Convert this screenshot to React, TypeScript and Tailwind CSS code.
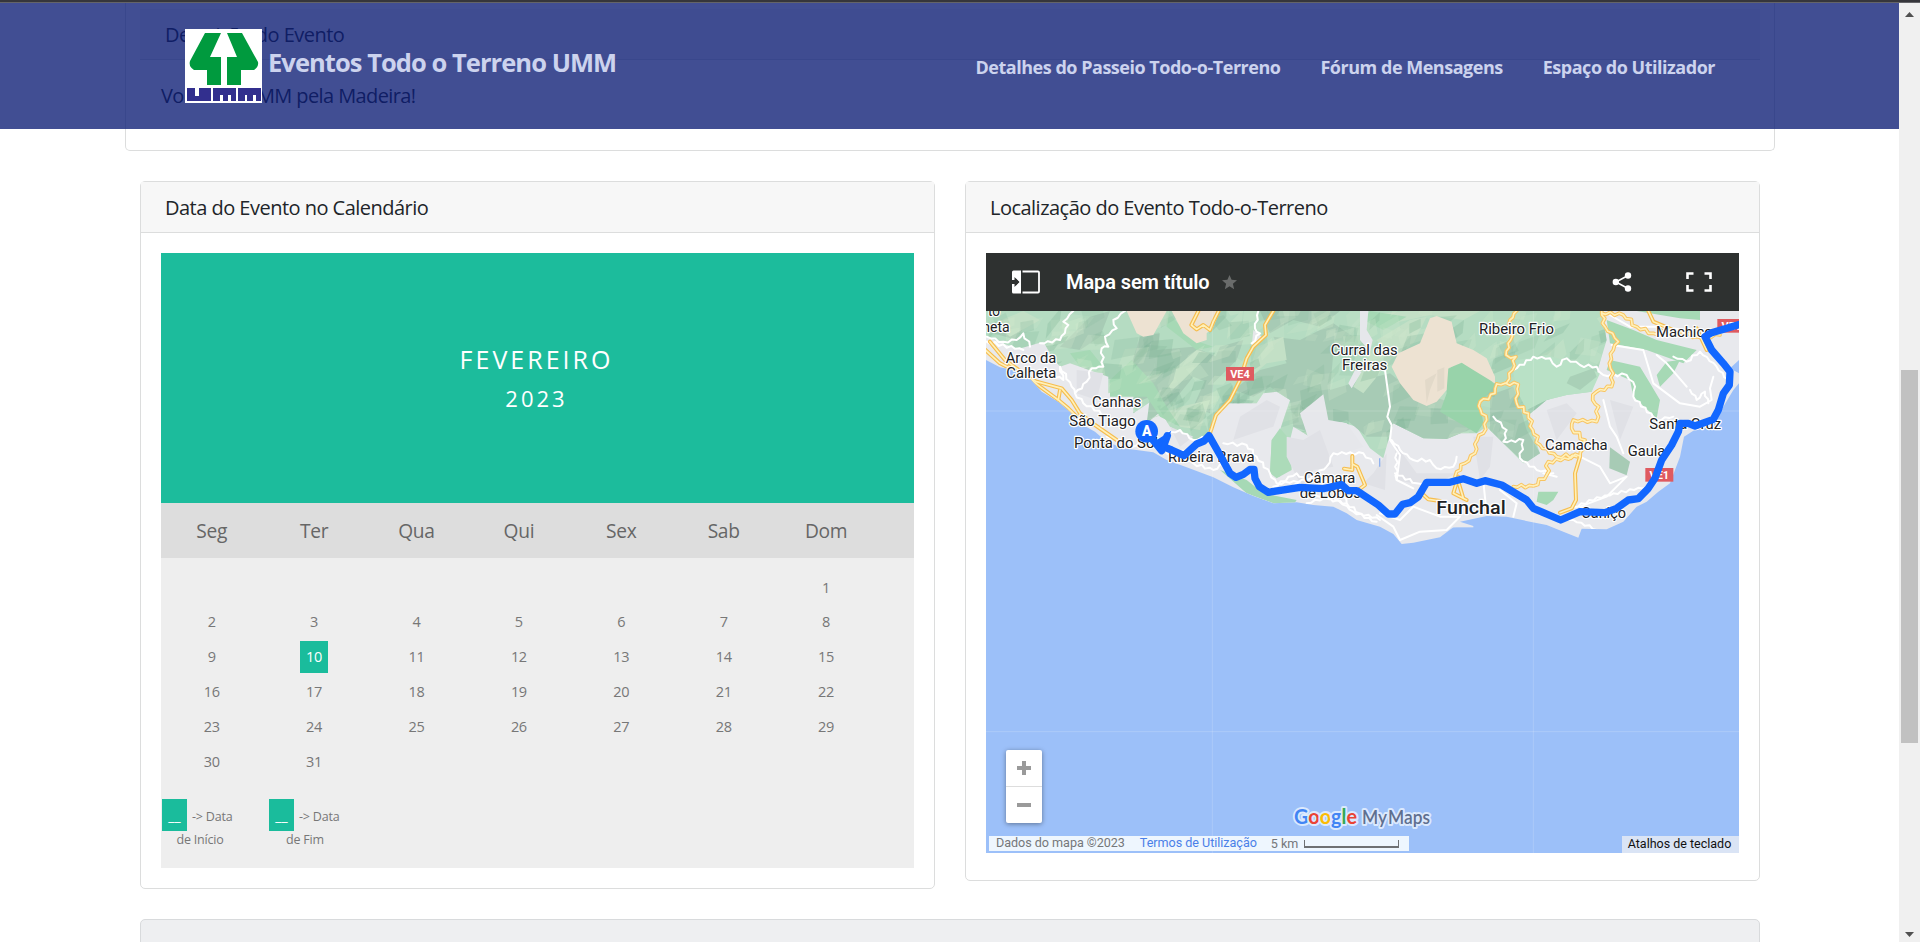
import React from "react";

const weekdays = ["Seg", "Ter", "Qua", "Qui", "Sex", "Sab", "Dom"];
const days: (number | null)[] = [
  ...Array<null>(6).fill(null),
  ...Array.from({ length: 31 }, (_, i) => i + 1),
];

function Logo() {
  return (
    <svg width="77" height="74" viewBox="0 0 77 74" className="block bg-white">
      <g fill="#009a3e">
        <path d="M20 4H36L25 28H36V56H22V41H9Q3 37 5 32Z" />
        <path d="M42 4H57L73 33Q74 38 69 41H56V56H42V28H52Z" />
      </g>
      <g fill="#322f8e">
        <path d="M2 59H10V67H14V59H26V72H2Z" />
        <path d="M28 59H51V72H46V66H43V72H38V66H35V72H28Z" />
        <path d="M53 59H76V72H71V66H68V72H62V66H60V72H53Z" />
      </g>
    </svg>
  );
}

// Small seeded generator, so that relief and winding roads are the same on every render.
function makeRandom(seed: number) {
  let s = seed;
  return () => {
    s = (s * 16807) % 2147483647;
    return s / 2147483647;
  };
}

// Adds bends to a polyline path made of absolute M/L coordinates.
function winding(d: string, amount: number, seed: number) {
  const rnd = makeRandom(seed);
  return d
    .split("M")
    .filter(Boolean)
    .map((part) => {
      const pts = part.split("L").map((p) => p.trim().split(" ").map(Number));
      // a run such as "L10 20L30 40" may also be written "L10 20 30 40"
      let out = `M${pts[0][0]} ${pts[0][1]}`;
      for (let i = 1; i < pts.length; i++) {
        const [x0, y0] = pts[i - 1];
        const [x1, y1] = pts[i];
        const len = Math.hypot(x1 - x0, y1 - y0);
        const n = Math.max(1, Math.round(len / 13));
        for (let k = 1; k < n; k++) {
          const t = k / n;
          const o = (k % 2 ? 1 : -1) * amount * (0.3 + 0.7 * rnd());
          const x = x0 + (x1 - x0) * t - ((y1 - y0) / len) * o;
          const y = y0 + (y1 - y0) * t + ((x1 - x0) / len) * o;
          out += `L${x.toFixed(1)} ${y.toFixed(1)}`;
        }
        out += `L${x1} ${y1}`;
      }
      return out;
    })
    .join("");
}

const toPath = (runs: number[][]) =>
  runs
    .map((r) => {
      let out = "";
      for (let i = 0; i < r.length; i += 2) out += `${i ? "L" : "M"}${r[i]} ${r[i + 1]}`;
      return out;
    })
    .join("");

const smoothYellow = [
  "M0 315L60 370L110 395L170 425L245 445L275 480L300 520L345 555L410 600",
  "M30 305L75 360L130 400L180 440L235 480L265 505L290 530",
  "M235 480L240 450",
  "M880 213L855 255L858 285L820 320L800 355L780 420L750 480L708 525L690 580",
  "M655 213L634 255L650 268L670 255L690 270L700 245L716 213",
  "M1117 648V690L1092 686M1117 672L1132 680L1155 735L1135 750",
  "M1800 650L1785 700L1788 780L1775 805L1740 818",
  "M2005 213L2020 245L2080 270M2150 265L2180 330",
  "M1320 755L1345 778L1380 783M1435 710L1420 760L1460 780M1435 725L1450 775",
];

const windingYellow = [
  [[1610, 213, 1590, 240, 1592, 300, 1578, 345, 1608, 350, 1598, 390, 1580, 428]],
  [[1550, 432, 1615, 433, 1610, 490, 1645, 520, 1658, 570, 1680, 615, 1730, 650, 1800, 648]],
  [[1550, 432, 1545, 460, 1500, 485, 1502, 510, 1520, 540, 1510, 580, 1492, 600, 1485, 640, 1455, 670, 1430, 695, 1425, 710]],
  [[1865, 213, 1875, 260, 1898, 280, 1915, 305, 1900, 330, 1888, 370, 1900, 400, 1895, 440, 1850, 455, 1838, 480, 1856, 500, 1850, 545, 1780, 540, 1775, 565, 1815, 600, 1800, 650]],
  [[1600, 740, 1660, 738, 1700, 705, 1705, 665, 1790, 650]],
  [[1865, 220, 1930, 225, 1970, 260, 2020, 280, 2080, 270, 2150, 290, 2220, 285]],
].map((r, i) => winding(toPath(r), 7, 31 + i));

const whiteRoads = [
  [[280, 213, 250, 245, 265, 255, 240, 300, 180, 310]],
  [[20, 290, 70, 305, 110, 300, 130, 280, 150, 320], [20, 305, 130, 330]],
  [[435, 213, 400, 240, 410, 265, 375, 290, 385, 320, 365, 325, 370, 380, 335, 385, 320, 425, 285, 460, 275, 440, 240, 380, 250, 420, 200, 400], [285, 460, 310, 490, 390, 535]],
  [[835, 213, 825, 265, 840, 280, 815, 310]],
  [[1235, 600, 1260, 630, 1300, 660, 1350, 660, 1370, 685, 1420, 680, 1430, 650], [1250, 640, 1250, 720], [1245, 700, 1310, 730, 1420, 725]],
  [[730, 610, 800, 615, 830, 650, 870, 700, 890, 730, 980, 720, 1040, 680, 1060, 640, 1150, 640, 1180, 670]],
  [[870, 760, 960, 730, 1020, 770, 1100, 790, 1140, 820, 1200, 840], [1020, 720, 1080, 735, 1100, 790]],
  [[380, 590, 420, 600, 460, 620, 500, 590, 530, 620, 570, 575, 600, 570, 640, 600, 680, 590]],
  [[560, 640, 640, 670, 700, 690, 730, 670]],
  [[1600, 390, 1660, 350, 1710, 355, 1730, 380, 1760, 355, 1800, 375, 1850, 380, 1870, 405, 1940, 405, 1965, 440, 1960, 470, 2030, 540, 2080, 530]],
  [[2080, 350, 2120, 365, 2160, 335, 2210, 380, 2250, 430], [2130, 450, 2150, 480, 2175, 455, 2185, 490]],
  [[1540, 530, 1580, 570, 1570, 605, 1630, 600, 1620, 655, 1670, 690, 1720, 700]],
  [[1640, 790, 1700, 820, 1780, 840, 1850, 870], [1780, 800, 1900, 760, 2000, 740]],
  [[980, 790, 1060, 770, 1120, 815, 1190, 845], [880, 740, 950, 700, 990, 730]],
].map((r, i) => winding(toPath(r), 5, 77 + i));

const plainWhite = [
  "M1215 390L1230 500L1222 530L1235 555L1230 600L1260 645L1250 720L1300 745",
  "M1895 315L1990 330L2020 430L2100 490L2160 500L2195 480L2190 445L2200 410",
  "M2030 345L2060 370L2120 440",
  "M1870 480L1890 560L1910 590L1930 640",
  "M1800 650L1860 680L1890 730L1940 710L1880 770L1800 800L1850 830",
  "M1200 820L1260 840L1300 800L1380 830L1440 830L1400 870L1320 875L1260 900L1240 860L1190 825",
  "M1510 725L1520 820M1560 750L1610 790L1600 830M1690 700L1730 710M1890 225L1950 260L2050 260L2110 270",
];

const relief = (() => {
  const rnd = makeRandom(4711);
  return Array.from({ length: 330 }, () => {
    const x = 18 + rnd() * 2000;
    const y = 205 + rnd() * 400;
    const a = -1.15 + rnd() * 0.9;
    const l = 35 + rnd() * 80;
    const w = 10 + rnd() * 32;
    const c = Math.cos(a);
    const s = Math.sin(a);
    const p = (u: number, v: number) => `${(x + c * u - s * v).toFixed(0)},${(y + s * u + c * v).toFixed(0)}`;
    return {
      points: [p(-l / 2, 0), p(-l * 0.1, -w), p(l / 2, -w * 0.2), p(l * 0.15, w * 0.7)].join(" "),
      fill: rnd() > 0.52 ? "#d4ebcf" : "#7fb497",
      opacity: 0.14 + rnd() * 0.2,
    };
  });
})();

const greenArea =
  "M18 213H1865L1880 300L1850 400L1835 455L1760 465L1700 480L1640 530L1680 640L1630 670L1570 610L1520 560L1490 580L1440 580L1400 597L1330 595L1240 550L1225 600L1210 655L1170 625L1130 560L1080 545L1040 570L990 590L940 560L930 600L900 710L870 700L875 600L900 570L930 480L890 455L850 460L830 490L740 490L708 525L680 585L640 600L570 560L520 480L460 520L460 435L385 460L385 410L300 380L270 370L240 380L200 330L150 340L120 330L18 290Z";

type Label = { x: number; y: number; t: string; w: number; s?: number };
const labels: Label[] = [
  { x: 24, y: 228, t: "to", w: 36 },
  { x: 7, y: 275, t: "heta", w: 82 },
  { x: 77, y: 370, t: "Arco da", w: 152 },
  { x: 79, y: 414, t: "Calheta", w: 150 },
  { x: 336, y: 501, t: "Canhas", w: 148 },
  { x: 268, y: 559, t: "São Tiago", w: 199 },
  { x: 282, y: 625, t: "Ponta do Sol", w: 252 },
  { x: 564, y: 666, t: "Ribeira Brava", w: 260 },
  { x: 972, y: 728, t: "Câmara", w: 154 },
  { x: 959, y: 774, t: "de Lobos", w: 184 },
  { x: 1052, y: 345, t: "Curral das", w: 201 },
  { x: 1086, y: 391, t: "Freiras", w: 136 },
  { x: 1497, y: 282, t: "Ribeiro Frio", w: 225 },
  { x: 2028, y: 291, t: "Machico", w: 170 },
  { x: 2008, y: 567, t: "Santa Cruz", w: 215 },
  { x: 1943, y: 648, t: "Gaula", w: 113 },
  { x: 1695, y: 629, t: "Camacha", w: 188 },
  { x: 1804, y: 834, t: "Caniço", w: 134 },
  { x: 1369, y: 822, t: "Funchal", w: 208, s: 56 },
];

function Shield({ x, y, t }: { x: number; y: number; t: string }) {
  return (
    <g>
      <rect x={x} y={y} width="84" height="41" fill="#df5a60" />
      <text x={x + 42} y={y + 32} textAnchor="middle" fontSize="33" fontWeight="700" fill="#fff">
        {t}
      </text>
    </g>
  );
}

function MapDrawing() {
  return (
    <svg
      viewBox="18 213 2259 1626"
      preserveAspectRatio="none"
      className="block h-full w-full"
      fontFamily="Roboto, sans-serif"
    >
      <defs>
        <clipPath id="land">
          <path d="M18 213V360L60 382L110 392L150 415L185 455L235 485L270 515L300 550L345 575L380 605L430 625L520 637L560 660L620 682L700 712L760 742L820 768L880 790L950 787L1000 795L1060 800L1100 820L1130 840L1200 860L1240 882L1265 912L1300 908L1380 892L1420 862L1480 858L1440 845L1520 828L1580 830L1650 845L1700 855L1750 875L1795 893L1805 866L1880 868L1930 845L1970 800L2000 785L2035 755L2070 730L2100 650L2112 590L2140 572L2195 560L2230 500L2260 450L2277 430V400L2250 385L2277 360V213Z" />
        </clipPath>
        <clipPath id="green">
          <path d={greenArea} />
        </clipPath>
      </defs>
      <rect x="18" y="213" width="2259" height="1626" fill="#9cc0f9" />
      <g clipPath="url(#land)">
        <rect x="18" y="213" width="2259" height="720" fill="#e8e9ed" />
        <path fill="#b5dcc2" d={greenArea} />
        <g fill="#a7cbb5">
          <path d="M480 290L540 280L520 400L480 420L455 370Z" />
          <path d="M530 330L640 320L710 350L690 430L640 410L600 460L560 500L500 550L510 470L440 500L520 400Z" />
          <path d="M720 320L790 300L770 360L700 430L690 520L640 500L680 410Z" />
          <path d="M880 290L960 300L1060 250L1120 290L1060 340L1050 450L1150 420L1230 400L1280 440L1390 480L1490 560L1400 597L1330 595L1240 550L1225 590L1160 590L1100 540L1050 560L1020 470L960 530L1000 580L940 560L930 480L870 440L820 470L760 450L840 390L920 370Z" />
          <path d="M840 213H1080L1020 260L940 240L870 280Z" />
          <path d="M60 240L150 225L110 300L40 280ZM330 230L390 213L360 290L300 330L240 320Z" />
          <path d="M1530 465L1600 440L1620 500L1640 570L1680 640L1635 670L1570 610L1530 570Z" />
        </g>
        <g fill="#c3e0c6">
          <path d="M590 380L650 330L690 340L600 430L530 490L580 420Z" />
          <path d="M830 320L910 290L920 360L860 370L800 420ZM1190 300L1290 240L1340 230L1300 310L1230 360Z" />
          <path d="M1145 225L1280 213H1500L1450 240L1350 225L1240 250ZM40 250L130 213L180 240L90 290Z" />
          <path d="M600 500L690 480L660 570L600 560L560 520L500 540ZM1180 330L1240 350L1150 460L1120 440Z" />
        </g>
        <g fill="#a6d9b5">
          <path d="M270 340L330 330L370 380L300 380ZM390 420L455 360L520 430L560 500L600 560L540 530L500 470L390 470Z" />
          <path d="M1170 213L1280 230L1210 270L1150 240ZM560 213L640 300L700 320L650 330L560 260Z" />
          <path d="M720 690L800 720L850 760L950 780L940 795L880 790L800 760Z" />
          <path d="M1880 240L1960 270L2030 300L2150 330L2110 370L2000 330L1890 310ZM1890 360L1980 380L2010 430L2040 480L2030 535L1960 470L1950 420L1880 390Z" />
          <path d="M2060 365L2100 360L2080 400L2040 440L2030 405ZM1675 755H1735L1720 780L1700 795L1670 785ZM1970 213H2160V240L2100 235Z" />
        </g>
        <path fill="#a7cbb5" d="M1890 622L1950 665L1940 706L1888 685Z" />
        <g clipPath="url(#green)">
          {relief.map((r, i) => (
            <polygon key={i} points={r.points} fill={r.fill} opacity={r.opacity} />
          ))}
        </g>
        <path fill="#b9e1c6" d="M1610 360L1700 345L1800 375L1860 400L1835 455L1760 465L1700 480L1640 510L1610 450L1600 400Z" />
        <path fill="#a9d0b7" d="M1770 410L1840 385L1850 410L1800 450L1760 430Z" />
        <g fill="#98d3aa">
          <path d="M1400 390L1440 365L1500 385L1545 435L1500 490L1510 550L1490 580L1380 515L1400 460Z" />
          <path d="M875 600L900 565L930 600L935 690L890 715L870 700Z" fill="#acdbb9" />
        </g>
        <g fill="#e6e7eb">
          <path d="M960 520L1030 463L1045 540L1100 550L1150 620L1060 650L990 610ZM1140 213H1165L1160 270L1178 300L1170 335L1140 300Z" />
          <path d="M1105 430L1125 390L1145 395L1115 445ZM105 330L190 305L210 340L170 350ZM820 270L845 290L815 320Z" />
        </g>
        <g fill="#e0e1e6">
          <path d="M920 590L970 600L1020 570L1060 680L1000 690L970 750L920 650ZM780 530L860 480L900 500L880 560L760 600Z" />
          <path d="M1245 610L1310 700L1430 700L1350 740L1250 720ZM1180 700L1220 640L1215 750L1150 730ZM1480 590L1540 590L1530 680L1500 720Z" />
          <path d="M290 390L370 400L350 480L290 460ZM570 560L640 590L600 620ZM1700 510L1760 490L1790 520L1730 600ZM1890 480L1960 500L1920 600Z" />
        </g>
        <g fill="#ede2d2">
          <path d="M440 213H560L520 285L490 290L470 280ZM575 213H720L700 260L680 280L680 300L650 310L610 280Z" />
          <path d="M1350 235L1370 228L1415 245L1430 310L1480 330L1520 355L1545 410V430L1480 390L1445 368L1405 385L1400 450L1370 485L1340 498L1300 480L1260 430L1235 380L1255 340L1320 310Z" />
        </g>
        <path fill="#e2d9c9" d="M1372 390L1393 382V445L1372 455ZM1335 420L1370 400L1350 450L1340 490Z" />
        <g fill="none" strokeLinejoin="round" strokeLinecap="round">
          {[...whiteRoads, ...plainWhite].map((d) => (
            <path key={d} d={d} stroke="#fff" strokeWidth="6" />
          ))}
          {smoothYellow.map((d) => (
            <path key={d} d={d} stroke="#f6bd4f" strokeWidth="12" />
          ))}
          {windingYellow.map((d) => (
            <path key={d} d={d} stroke="#f8c462" strokeWidth="11" />
          ))}
          {[...smoothYellow, ...windingYellow].map((d) => (
            <path key={d} d={d} stroke="#fff0b8" strokeWidth="5" />
          ))}
        </g>
        <path d="M1199 655V680" stroke="#8fb2ee" strokeWidth="4" />
      </g>
      <path d="M1418 860H1480" stroke="#e8e9ed" strokeWidth="4" />
      <g stroke="#fff" strokeOpacity="0.17" strokeWidth="3">
        <path d="M18 513H2277M18 1475H2277M697 213V1839M1660 213V1839" />
      </g>
      <g fill="#202124" stroke="#fff" strokeWidth="7" strokeLinejoin="round" paintOrder="stroke">
        {labels.map((l) => (
          <text
            key={l.t}
            x={l.x}
            y={l.y}
            fontSize={l.s ?? 43}
            fontWeight={l.s ? 500 : 400}
            textLength={l.w}
            lengthAdjust="spacingAndGlyphs"
          >
            {l.t}
          </text>
        ))}
      </g>
      <Shield x={738} y={381} t="VE4" />
      <Shield x={1996} y={684} t="VE1" />
      <Shield x={2212} y={237} t="VE1" />
      <path
        fill="none"
        stroke="#1267ff"
        strokeWidth="22"
        strokeLinecap="round"
        strokeLinejoin="round"
        d="M515 595L545 632L562 587L550 620L575 630L612 647L650 612L672 603L687 587L720 645L750 700L768 712L790 703L810 688H822L825 715L838 740L865 757L960 742L1030 746L1085 734L1105 752L1130 752L1195 795L1225 822H1245L1268 793L1290 788L1315 770L1340 727H1410L1450 716L1490 730L1515 722L1565 735L1640 780L1660 805L1742 840L1800 815L1875 818L1910 805L1945 780L1975 776L2005 745L2025 715L2045 660L2075 615L2095 575L2100 550H2125L2145 558L2200 538L2215 510L2230 460L2248 435L2250 395L2230 370L2195 330L2175 290L2195 278L2280 253"
      />
      <path d="M525 610L562 587L545 632Z" fill="#1267ff" stroke="#1267ff" strokeWidth="12" />
      <circle cx="500" cy="574" r="34" fill="#1267ff" />
      <text x="500" y="589" textAnchor="middle" fontSize="42" fontWeight="900" fill="#fff">
        A
      </text>
    </svg>
  );
}

function MapHeader() {
  return (
    <div className="flex h-[58px] shrink-0 items-center bg-[#2e3130] pl-[26px] pr-[27px] text-white">
      <svg width="28" height="24" viewBox="0 0 28 24" className="block">
        <path d="M1.5 .5H9V23.500H1.500Q0 23.500 0 22V14H2.500V17L7 12L2.500 7V10H0V2Q0 .5 1.500 .5Z" fill="#fff" />
        <path d="M0 11H3.500V8L7.500 12L3.500 16V13H0Z" fill="#2e3130" />
        <path d="M10.500 1.500H26Q27 1.500 27 2.500V21.500Q27 22.500 26 22.500H10.500" fill="none" stroke="#fff" strokeWidth="1.8" />
      </svg>
      <span className="ml-[26px] font-[Roboto,sans-serif] text-[20px] font-semibold leading-none tracking-[-0.1px] whitespace-nowrap">
        Mapa sem título
      </span>
      <svg width="15" height="16" viewBox="2 2 20 19" className="ml-[12px] block">
        <path fill="#6a6c6b" d="M12 17.270L18.180 21l-1.640-7.030L22 9.240l-7.190-.61L12 2 9.190 8.630 2 9.240l5.460 4.730L5.820 21z" />
      </svg>
      <svg width="20" height="20" viewBox="0 0 20 20" className="ml-auto block">
        <path d="M16 3.500L4 10L16 16.500" fill="none" stroke="#fff" strokeWidth="1.600" />
        <g fill="#fff">
          <circle cx="16" cy="3.500" r="3.200" />
          <circle cx="3.800" cy="10" r="3.200" />
          <circle cx="16" cy="16.500" r="3.200" />
        </g>
      </svg>
      <svg width="26" height="20" viewBox="0 0 26 20" className="ml-[54px] block">
        <path d="M7.500 1.500H1.500V7M18.500 1.500H24.500V7M1.500 13V18.500H7.500M24.500 13V18.500H18.500" fill="none" stroke="#fff" strokeWidth="2.600" />
      </svg>
    </div>
  );
}

function Card({ title, className, children }: { title: string; className: string; children: React.ReactNode }) {
  return (
    <section className={`w-[795px] rounded-[5px] border border-[#dcdddd] bg-white ${className}`}>
      <h2 className="h-[51px] border-b border-[#dcdddd] bg-[#f7f7f7] pl-[24px] text-[20px] leading-[51px] tracking-[-0.520px] whitespace-nowrap text-[#212529]">
        {title}
      </h2>
      <div className="p-5">{children}</div>
    </section>
  );
}

function Legend({ text, className }: { text: string; className: string }) {
  return (
    <li className={`text-center text-[12.500px] leading-[23px] tracking-[-0.200px] whitespace-nowrap text-[#777] ${className}`}>
      <div className="flex h-[32px] items-start">
        <span className="h-[32px] w-[25px] bg-[#1abc9c] text-[14px] leading-[33px] tracking-normal text-white">__</span>
        <span className="pt-[6px] pl-[5px]">-&gt; Data</span>
      </div>
      <div className="mt-[-3px]">{text}</div>
    </li>
  );
}

function Calendar() {
  return (
    <div className="w-[753px]">
      <div className="flex h-[250px] flex-col items-center bg-[#1cbc9c] pt-[86px] text-white uppercase">
        <div className="pr-[2px] text-[25px] leading-[40px] tracking-[3px]">Fevereiro</div>
        <div className="pr-[2px] text-[22px] leading-[38px] tracking-[3px]">2023</div>
      </div>
      <ul className="flex h-[55px] items-center bg-[#dddddd] text-center text-[19.200px] tracking-[-0.300px] text-[#666]">
        {weekdays.map((d) => (
          <li key={d} className="w-[102.400px] pt-[2px] pr-[1px]">{d}</li>
        ))}
      </ul>
      <div className="h-[310px] bg-[#eeeeee] pt-[12px]">
        <ul className="grid grid-cols-[repeat(7,102.400px)] auto-rows-[34.800px] text-center text-[14.500px] tracking-[-0.300px] text-[#777]">
          {days.map((d, i) => (
            <li key={i} className="flex items-center justify-center pr-[1px]">
              {d === 10 ? (
                <span className="flex h-[32px] w-[28px] items-center justify-center bg-[#1abc9c] text-white">10</span>
              ) : (
                d
              )}
            </li>
          ))}
        </ul>
        <ul className="mt-[20px] flex pl-px">
          <Legend text="de Início" className="w-[76px]" />
          <Legend text="de Fim" className="ml-[31px] w-[72px]" />
        </ul>
      </div>
    </div>
  );
}

function MapEmbed() {
  return (
    <div className="flex h-[600px] w-[753px] flex-col font-[Roboto,sans-serif]">
      <MapHeader />
      <div className="relative h-[542px]">
        <MapDrawing />
        <div className="absolute top-[439px] left-[20px] flex h-[73px] w-[36px] flex-col rounded-[2px] bg-white shadow-[0_1px_5px_rgba(0,0,0,0.4)]">
          <div className="flex flex-1 items-center justify-center border-b border-[#ddd]">
            <svg width="14" height="14" viewBox="0 0 14 14"><path d="M5 0H9V5H14V9H9V14H5V9H0V5H5Z" fill="#9a9a9a" /></svg>
          </div>
          <div className="flex flex-1 items-center justify-center">
            <svg width="14" height="4" viewBox="0 0 14 4"><path d="M0 0H14V4H0Z" fill="#9a9a9a" /></svg>
          </div>
        </div>
        <svg width="145" height="30" viewBox="0 0 145 30" className="absolute top-[493px] left-[306px]">
          <g stroke="#dbe9fd" strokeWidth="4" strokeLinejoin="round" paintOrder="stroke" fontSize="21" fontFamily="Lato, sans-serif">
            <text x="2" y="20" textLength="63" lengthAdjust="spacingAndGlyphs" fontWeight="700">
              <tspan fill="#4285f4">G</tspan>
              <tspan fill="#ea4335">o</tspan>
              <tspan fill="#fbbc04">o</tspan>
              <tspan fill="#4285f4">g</tspan>
              <tspan fill="#34a853">l</tspan>
              <tspan fill="#ea4335">e</tspan>
            </text>
            <text x="70" y="20" textLength="68" lengthAdjust="spacingAndGlyphs" fontSize="18.500" fontWeight="600" wordSpacing="-3" fill="#5f6f8f">
              My Maps
            </text>
          </g>
        </svg>
        <div className="absolute top-[525px] left-[3px] flex h-[15px] w-[420px] items-center bg-[#eef6fe] pl-[7px] text-[12.600px] leading-none tracking-[-0.040px] whitespace-nowrap text-[#75777a]">
          <span>Dados do mapa ©2023</span>
          <span className="ml-[15px] text-[#4a80e8]">Termos de Utilização</span>
          <span className="ml-[14px] pt-[2px]">5 km</span>
          <span className="mt-[1px] ml-[6px] h-[8px] w-[95px] border-x border-b-2 border-[#6e7073]" />
        </div>
        <div className="absolute right-0 bottom-0 flex h-[17px] w-[117px] items-center justify-center bg-[#dae4f5] pr-[2px] text-[12.500px] whitespace-nowrap text-[#111]">
          Atalhos de teclado
        </div>
      </div>
    </div>
  );
}

export default function App() {
  return (
    <div className="relative flex h-[942px] w-[1920px] overflow-hidden bg-white font-['Open_Sans','Noto_Sans',sans-serif]">
      <main className="flex w-[1899px] flex-col">
        <section className="ml-[125px] h-[151px] w-[1650px] shrink-0 rounded-b-[5px] border border-t-0 border-[#dcdddd] px-[14px] pt-[9px] text-[#212529]">
          <h2 className="h-[51px] border-b border-[#dcdddd] bg-[#f7f7f7] pl-[25px] text-[20px] leading-[51px] tracking-[-0.520px]">Descrição do Evento</h2>
          <p className="mt-[19px] pl-[21px] text-[20px] leading-[34px] tracking-[-0.600px]">Volta em UMM pela Madeira!</p>
        </section>
        <div className="mt-[30px] ml-[140px] flex w-[1620px] items-start justify-between">
          <Card title="Data do Evento no Calendário" className="h-[708px]">
            <Calendar />
          </Card>
          <Card title="Localização do Evento Todo-o-Terreno" className="h-[700px]">
            <MapEmbed />
          </Card>
        </div>
        <section className="mt-[30px] ml-[140px] h-[60px] w-[1620px] shrink-0 rounded-t-[5px] border border-[#d8dadc] bg-[#eeeff1]" />
      </main>
      <aside className="flex w-[21px] flex-col items-center justify-between bg-[#f0f0f0] pt-[12px] pb-[5px]">
        <svg width="9" height="5" viewBox="0 0 9 5"><path d="M4.500 0L9 5H0Z" fill="#505050" /></svg>
        <div className="mt-[353px] mb-auto h-[373px] w-[17px] bg-[#c1c1c1]" />
        <svg width="9" height="5" viewBox="0 0 9 5"><path d="M4.500 5L9 0H0Z" fill="#505050" /></svg>
      </aside>
      <header className="absolute top-[3px] left-0 flex h-[126px] w-[1899px] bg-[#0b1c75]/78 pr-[184px] pl-[185px] font-bold text-[#ccd3ee]">
        <div className="mt-[26px] h-[74px] w-[77px]">
          <Logo />
        </div>
        <span className="mt-[41px] ml-[6px] text-[25.500px] leading-[36px] tracking-[-0.950px] whitespace-nowrap">Eventos Todo o Terreno UMM</span>
        <nav className="mt-[50px] ml-auto flex gap-[40px] text-[18px] leading-[28px] tracking-[-0.480px] whitespace-nowrap">
          <a>Detalhes do Passeio Todo-o-Terreno</a>
          <a>Fórum de Mensagens</a>
          <a>Espaço do Utilizador</a>
        </nav>
      </header>
      <div className="absolute top-0 left-0 h-[3px] w-full border-b border-[#646468] bg-[#36363b]" />
    </div>
  );
}
